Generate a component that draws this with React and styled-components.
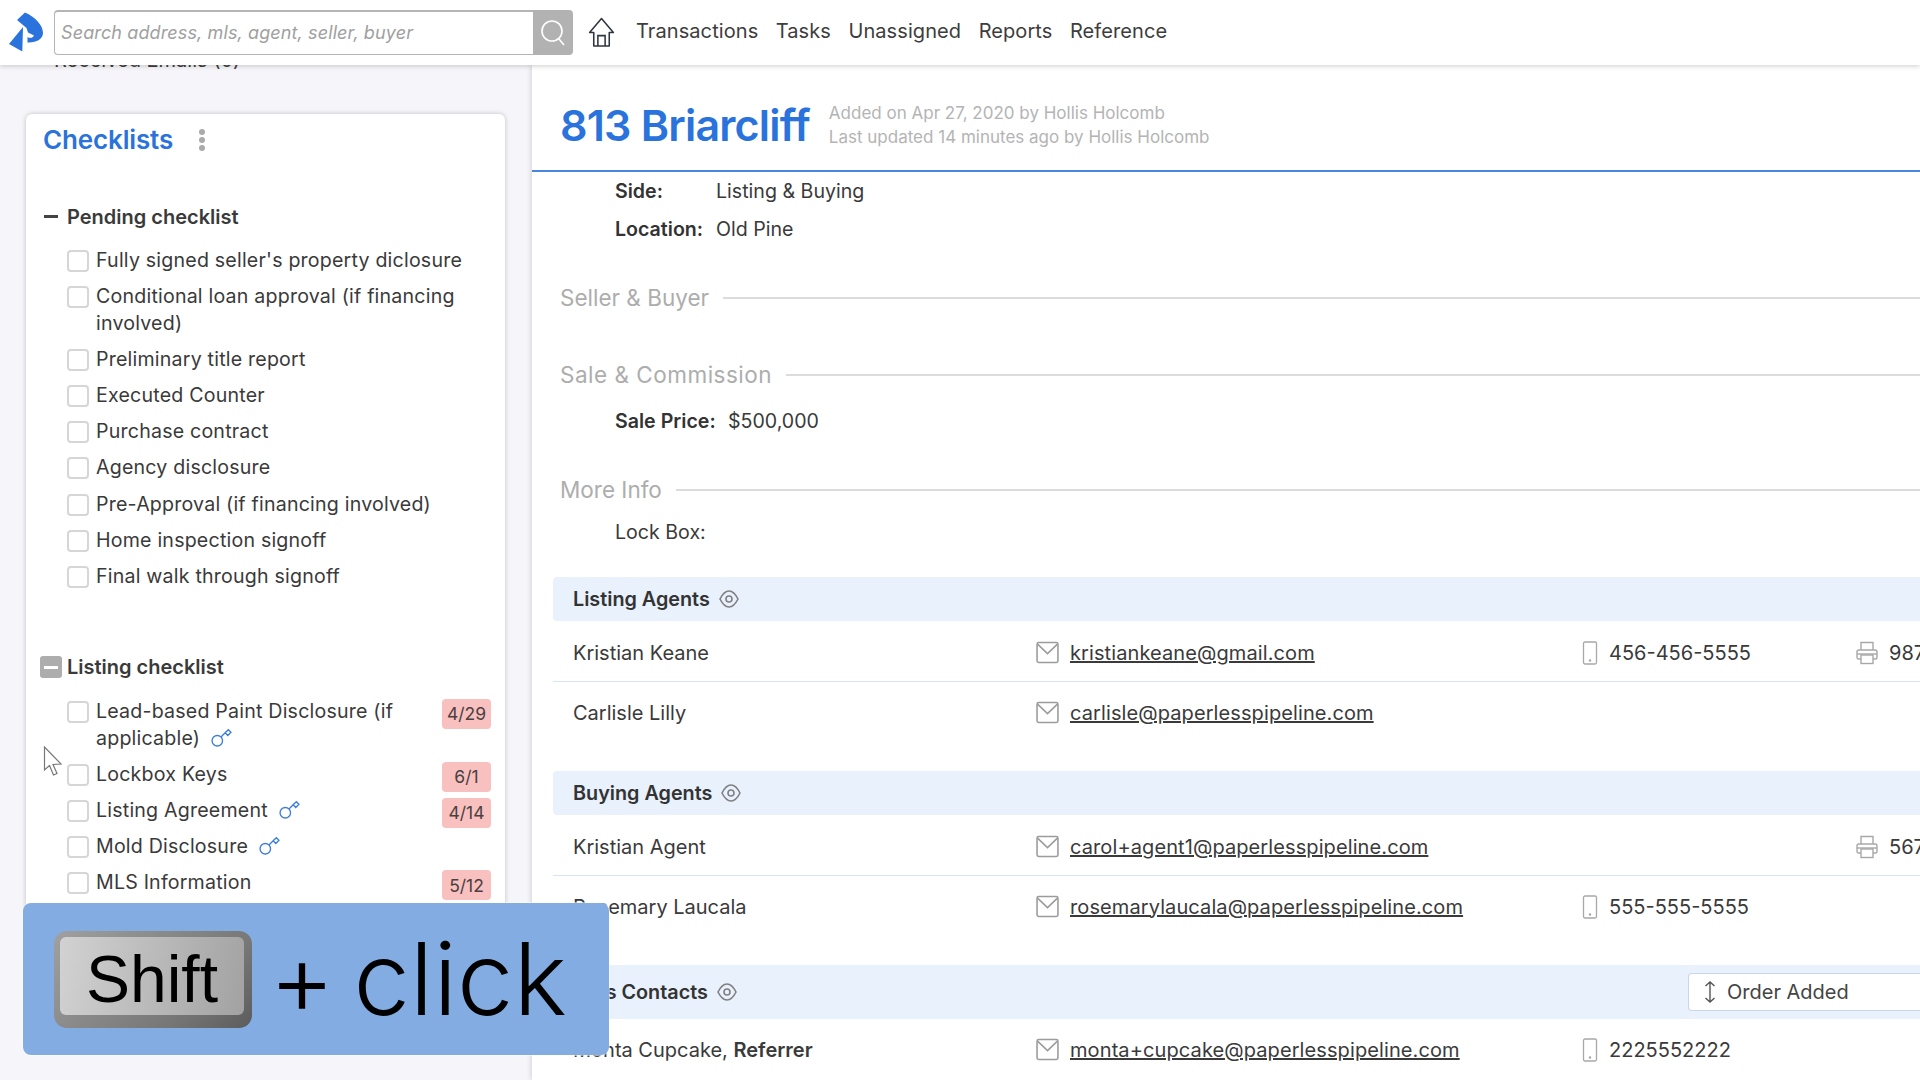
import React from "react";
import styled, { createGlobalStyle } from "styled-components";

const Global = createGlobalStyle`
  html, body { margin: 0; padding: 0; height: 100%; overflow: hidden; }
  body { font-family: Inter, "Noto Sans", sans-serif; color: #3a3a3a; background: #fff; }
  * { box-sizing: border-box; }
`;

const Page = styled.div`
  position: relative;
  width: 1920px;
  height: 1080px;
  overflow: hidden;
  display: flex;
  flex-direction: column;
`;

const Header = styled.header`
  position: relative;
  z-index: 2;
  flex: 0 0 65px;
  height: 65px;
  background: #fff;
  box-shadow: 0 1px 5px rgba(0, 0, 0, 0.2);
  display: flex;
  align-items: center;
  padding-left: 9px;
`;

const Search = styled.div`
  display: flex;
  width: 519px;
  height: 45px;
  margin-left: 9px;
`;

const SearchField = styled.div`
  flex: 1;
  border: 1px solid #b5b5b5;
  border-top: 2px solid #b5b5b5;
  border-right: 0;
  border-radius: 4px 0 0 4px;
  display: flex;
  align-items: center;
  padding: 0 0 2px 6px;
  font-style: italic;
  font-size: 18px;
  letter-spacing: 0.12px;
  color: #a0a0a0;
`;

const SearchButton = styled.div`
  flex: 0 0 40px;
  background: #b2b2b2;
  border-radius: 0 4px 4px 0;
  display: flex;
  align-items: center;
  justify-content: center;
`;

const HomeLink = styled.div`
  margin-left: 15px;
  display: flex;
`;

const Nav = styled.nav`
  display: flex;
  margin-left: 21px;
  gap: 17.5px;
  padding-bottom: 3px;
`;

const NavItem = styled.span`
  font-size: 20px;
  letter-spacing: 0.08px;
  color: #3d3d3d;
`;

const Body = styled.div`
  flex: 1;
  display: flex;
  min-height: 0;
`;

const Sidebar = styled.aside`
  flex: 0 0 532px;
  background: #f6f5f9;
  overflow: hidden;
  padding-left: 26px;
`;

const ClippedLine = styled.div`
  margin: -18px 0 40px 28px;
  height: 27px;
  line-height: 27px;
  font-size: 20px;
  color: #3d3d3d;
`;

const Card = styled.section`
  width: 479px;
  background: #fff;
  border-radius: 6px;
  box-shadow: 0 0 5px rgba(0, 0, 0, 0.22);
  padding: 0 14px 70px 17px;
`;

const CardTitleRow = styled.div`
  height: 51px;
  margin-bottom: 1px;
  display: flex;
  align-items: center;
`;

const CardTitle = styled.h2`
  margin: 0;
  font-size: 26px;
  font-weight: 600;
  letter-spacing: -0.15px;
  color: #2a73dc;
`;

const KebabDots = styled.div`
  margin-left: 26px;
  display: flex;
  flex-direction: column;
  gap: 2px;
`;

const Dot = styled.i`
  display: block;
  width: 6px;
  height: 6px;
  border-radius: 50%;
  background: #aaa;
`;

const ChecklistBody = styled.div`
  padding-left: 24px;
`;

const ChecklistHeading = styled.div`
  display: flex;
  align-items: center;
  height: 27px;
  margin: ${(p) => p.$top}px 0 17px -27px;
  gap: 5px;
  font-size: 20px;
  font-weight: 600;
  color: #3a3a3a;
`;

const Toggle = styled.span`
  flex: 0 0 22px;
  height: 22px;
  border-radius: 3px;
  display: flex;
  align-items: center;
  justify-content: center;
  background: ${(p) => (p.$filled ? "#adadad" : "transparent")};
  &::before {
    content: "";
    width: 14px;
    height: 3px;
    background: ${(p) => (p.$filled ? "#fff" : "#444")};
  }
`;

const ItemList = styled.div`
  display: flex;
  flex-direction: column;
  gap: 9.1px;
`;

const Item = styled.div`
  display: flex;
  align-items: flex-start;
`;

const Box = styled.span`
  flex: 0 0 22px;
  height: 22px;
  margin-top: 3px;
  margin-right: 7px;
  background: #fff;
  border: 2px solid #d6d6d6;
  border-radius: 4px;
`;

const ItemText = styled.div`
  flex: 1;
  font-size: 19.6px;
  line-height: 27px;
  letter-spacing: 0.2px;
  color: #3a3a3a;
  white-space: nowrap;
`;

const KeyMark = styled.svg`
  margin-left: 11px;
  vertical-align: -2px;
`;

const DueBadge = styled.span`
  flex: 0 0 49px;
  height: 30px;
  margin: 1px 0 -4px;
  background: #f9c0c0;
  border-radius: 4px;
  display: flex;
  align-items: center;
  justify-content: center;
  font-size: 17.5px;
  color: #4a4040;
`;

const Main = styled.main`
  flex: 1;
  min-width: 0;
  background: #fff;
  box-shadow: -1px 0 5px rgba(0, 0, 0, 0.14);
  overflow: hidden;
`;

const TitleBar = styled.div`
  height: 107px;
  border-bottom: 2px solid #4a86e0;
  display: flex;
  align-items: center;
  padding: 15px 0 0 28px;
`;

const Address = styled.h1`
  margin: 0;
  font-size: 43px;
  font-weight: 600;
  letter-spacing: -0.8px;
  color: #2a73dc;
`;

const Meta = styled.div`
  margin-left: 19px;
  font-size: 17px;
  line-height: 24px;
  color: #b4b4b4;
`;

const InfoRow = styled.div`
  display: flex;
  align-items: center;
  height: 38px;
  margin-top: ${(p) => p.$top || 0}px;
  padding-left: 83px;
  font-size: 19.6px;
`;

const InfoLabel = styled.b`
  font-weight: 600;
  color: #333;
  flex: 0 0 ${(p) => p.$w}px;
`;

const SectionTitle = styled.div`
  display: flex;
  align-items: center;
  height: 40px;
  margin-top: ${(p) => p.$top}px;
  padding: 0 0 1px 28px;
  gap: 14px;
  font-size: 22.5px;
  letter-spacing: ${(p) => (p.$wide ? "0.5px" : "0")};
  color: #adadad;
  &::after {
    content: "";
    flex: 1;
    height: 2px;
    background: #dcdcdc;
  }
`;

const Band = styled.div`
  display: flex;
  align-items: center;
  height: ${(p) => p.$h || 44}px;
  margin: ${(p) => p.$top}px 0 0 21px;
  padding-left: 20px;
  background: #e8f1fc;
  border-radius: 4px 0 0 4px;
  font-size: 19.8px;
  font-weight: 600;
  color: #333;
`;

const EyeMark = styled.svg`
  margin-left: 9px;
`;

const OrderSelect = styled.div`
  margin-left: auto;
  flex: 0 0 232px;
  height: 38px;
  background: #fff;
  border: 1px solid #c9d6e6;
  border-right: 0;
  border-radius: 4px 0 0 4px;
  display: flex;
  align-items: center;
  padding-left: 15px;
  gap: 11px;
  font-size: 20px;
  font-weight: 400;
  color: #444;
`;

const ContactRow = styled.div`
  display: grid;
  grid-template-columns: 463px 546px 274px 1fr;
  align-items: center;
  height: ${(p) => (p.$rule ? 61 : 60)}px;
  margin-left: 21px;
  padding: ${(p) => (p.$rule ? 3 : 1)}px 0 0 20px;
  border-bottom: ${(p) => (p.$rule ? "1px solid #d8e6f4" : "0")};
  font-size: 20px;
  color: #3a3a3a;
  white-space: nowrap;
`;

const Cell = styled.div`
  display: flex;
  align-items: center;
  gap: 11px;
`;

const Mail = styled.a`
  color: #3a3a3a;
  text-decoration: underline;
  letter-spacing: 0.1px;
`;

const Role = styled.b`
  font-weight: 600;
`;

const Overlay = styled.div`
  position: absolute;
  z-index: 3;
  left: 23px;
  top: 903px;
  width: 586px;
  height: 152px;
  background: #82ace2;
  border-radius: 8px;
  box-shadow: 0 0 0 1px rgba(255, 255, 255, 0.5);
  display: flex;
  align-items: center;
  padding-left: 31px;
  color: #000;
`;

const KeyCap = styled.div`
  width: 198px;
  height: 97px;
  padding: 6px 8px 13px 6px;
  border-radius: 13px;
  background: linear-gradient(135deg, #a0a0a0, #777 70%, #5c5c5c);
  display: flex;
`;

const KeyFace = styled.div`
  flex: 1;
  border-radius: 6px;
  background: linear-gradient(100deg, #d2d2d2, #a2a2a2);
  display: flex;
  align-items: center;
  justify-content: center;
  padding-top: 7px;
  font-family: "Liberation Sans", Arial, sans-serif;
  font-size: 66px;
  line-height: 1;
`;

const OverlayText = styled.div`
  margin-left: 17px;
  padding-bottom: 3px;
  font-size: 101px;
  font-weight: 300;
  white-space: nowrap;
  word-spacing: -10px;
`;

const Pointer = styled.svg`
  position: absolute;
  z-index: 3;
  left: 43px;
  top: 746px;
`;

const Logo = () => (
  <svg width="36" height="42" viewBox="0 0 36 42" fill="#2a73dc">
    <path d="M0 32 L14 15 L13.300 39.500 Z" />
    <path d="M8 8 L16 0.500 C26 5 34 13 34 21 C34 27 27 31 18.500 30.500 L18.500 25 C21 26.500 24 26 25 23.500 L19 20.500 L17.500 16 Z" />
  </svg>
);

const Mag = () => (
  <svg width="26" height="28" viewBox="0 0 26 28" fill="none" stroke="#fff" strokeWidth="1.6">
    <circle cx="12" cy="12" r="10" />
    <path d="M19 20 L24 26" />
  </svg>
);

const Home = () => (
  <svg width="27" height="31" viewBox="0 0 25 30" fill="none" stroke="#2f3640" strokeWidth="1.5">
    <path d="M1 15 L12.500 1.500 L24 15 L20 15 L20 28 L5 28 L5 15 Z" strokeLinejoin="round" />
    <path d="M9 28 L9 18 L16 18 L16 28" />
  </svg>
);

const KeyIcon = () => (
  <KeyMark width="21" height="21" viewBox="0 0 20 20" fill="none" stroke="#3e7fdc" strokeWidth="1.3">
    <circle cx="6" cy="14" r="5" />
    <path d="M9.500 10.500 L13.500 6.500 L16 9 L19 6 L16.500 3.500 L13.500 6.500" />
  </KeyMark>
);

const Eye = () => (
  <EyeMark width="20" height="18" viewBox="0 0 20 18" fill="none" stroke="#808080" strokeWidth="1.6">
    <path d="M1 9 C4 3 7 1 10 1 C13 1 16 3 19 9 C16 15 13 17 10 17 C7 17 4 15 1 9 Z" />
    <circle cx="10" cy="9" r="3" />
  </EyeMark>
);

const MailIcon = () => (
  <svg width="23" height="23" viewBox="0 0 22 22" fill="none" stroke="#9c9c9c" strokeWidth="1.5">
    <rect x="1" y="1.500" width="20" height="19" rx="1.500" />
    <path d="M1.500 3 L11 12 L20.500 3" />
  </svg>
);

const PhoneIcon = () => (
  <svg width="16" height="24" viewBox="0 0 15 24" fill="none" stroke="#a8a8a8" strokeWidth="1.3">
    <rect x="1" y="1" width="13" height="22" rx="1.500" />
    <circle cx="7.500" cy="19.500" r="0.600" fill="#8a8a8a" />
  </svg>
);

const PrinterIcon = () => (
  <svg width="22" height="24" viewBox="0 0 22 24" fill="none" stroke="#a8a8a8" strokeWidth="1.4">
    <path d="M5 9 V1.500 H17 V9" />
    <path d="M5 18 H2.500 C1.500 18 1 17 1 16 V11 C1 10 2 9 3 9 H19 C20 9 21 10 21 11 V16 C21 17 20.500 18 19.500 18 H17" />
    <path d="M1 13 H21" />
    <rect x="5" y="14" width="12" height="8.500" />
  </svg>
);

const SortArrow = () => (
  <svg width="12" height="22" viewBox="0 0 12 22" fill="none" stroke="#555" strokeWidth="1.4">
    <path d="M6 1 V21 M1.500 5 L6 1 L10.500 5 M1.500 17 L6 21 L10.500 17" />
  </svg>
);

const Check = ({ children, due, hasKey }) => (
  <Item>
    <Box />
    <ItemText>
      {children}
      {hasKey && <KeyIcon />}
    </ItemText>
    {due && <DueBadge>{due}</DueBadge>}
  </Item>
);

const Person = ({ name, email, phone, fax, rule }) => (
  <ContactRow $rule={rule}>
    <div>{name}</div>
    <Cell>
      <MailIcon />
      <Mail>{email}</Mail>
    </Cell>
    <Cell>
      {phone && <PhoneIcon />}
      {phone}
    </Cell>
    <Cell>
      {fax && <PrinterIcon />}
      {fax}
    </Cell>
  </ContactRow>
);

export default function App() {
  return (
    <Page>
      <Global />
      <Header>
        <Logo />
        <Search>
          <SearchField>Search address, mls, agent, seller, buyer</SearchField>
          <SearchButton>
            <Mag />
          </SearchButton>
        </Search>
        <HomeLink>
          <Home />
        </HomeLink>
        <Nav>
          <NavItem>Transactions</NavItem>
          <NavItem>Tasks</NavItem>
          <NavItem>Unassigned</NavItem>
          <NavItem>Reports</NavItem>
          <NavItem>Reference</NavItem>
        </Nav>
      </Header>
      <Body>
        <Sidebar>
          <ClippedLine>Received Emails (0)</ClippedLine>
          <Card>
            <CardTitleRow>
              <CardTitle>Checklists</CardTitle>
              <KebabDots>
                <Dot />
                <Dot />
                <Dot />
              </KebabDots>
            </CardTitleRow>
            <ChecklistBody>
              <ChecklistHeading $top={38}>
                <Toggle />
                Pending checklist
              </ChecklistHeading>
              <ItemList>
                <Check>Fully signed seller's property diclosure</Check>
                <Check>
                  Conditional loan approval (if financing
                  <br />
                  involved)
                </Check>
                <Check>Preliminary title report</Check>
                <Check>Executed Counter</Check>
                <Check>Purchase contract</Check>
                <Check>Agency disclosure</Check>
                <Check>Pre-Approval (if financing involved)</Check>
                <Check>Home inspection signoff</Check>
                <Check>Final walk through signoff</Check>
              </ItemList>
              <ChecklistHeading $top={64}>
                <Toggle $filled />
                Listing checklist
              </ChecklistHeading>
              <ItemList>
                <Check due="4/29" hasKey>
                  Lead-based Paint Disclosure (if
                  <br />
                  applicable)
                </Check>
                <Check due="6/1">Lockbox Keys</Check>
                <Check due="4/14" hasKey>
                  Listing Agreement
                </Check>
                <Check hasKey>Mold Disclosure</Check>
                <Check due="5/12">MLS Information</Check>
              </ItemList>
            </ChecklistBody>
          </Card>
        </Sidebar>
        <Main>
          <TitleBar>
            <Address>813 Briarcliff</Address>
            <Meta>
              Added on Apr 27, 2020 by Hollis Holcomb
              <br />
              Last updated 14 minutes ago by Hollis Holcomb
            </Meta>
          </TitleBar>
          <InfoRow>
            <InfoLabel $w={101}>Side:</InfoLabel>
            Listing &amp; Buying
          </InfoRow>
          <InfoRow>
            <InfoLabel $w={101}>Location:</InfoLabel>
            Old Pine
          </InfoRow>
          <SectionTitle $top={30}>Seller &amp; Buyer</SectionTitle>
          <SectionTitle $top={37} $wide>
            Sale &amp; Commission
          </SectionTitle>
          <InfoRow $top={7}>
            <InfoLabel $w={113}>Sale Price:</InfoLabel>
            $500,000
          </InfoRow>
          <SectionTitle $top={30}>More Info</SectionTitle>
          <InfoRow $top={3}>Lock Box:</InfoRow>
          <Band $top={26}>
            Listing Agents
            <Eye />
          </Band>
          <Person
            rule
            name="Kristian Keane"
            email="kristiankeane@gmail.com"
            phone="456-456-5555"
            fax="987-654-3210"
          />
          <Person name="Carlisle Lilly" email="carlisle@paperlesspipeline.com" />
          <Band $top={29}>
            Buying Agents
            <Eye />
          </Band>
          <Person
            rule
            name="Kristian Agent"
            email="carol+agent1@paperlesspipeline.com"
            fax="567-890-1234"
          />
          <Person
            name="Rosemary Laucala"
            email="rosemarylaucala@paperlesspipeline.com"
            phone="555-555-5555"
          />
          <Band $top={29} $h={54}>
            VIPs Contacts
            <Eye />
            <OrderSelect>
              <SortArrow />
              Order Added
            </OrderSelect>
          </Band>
          <Person
            name={
              <>
                Monta Cupcake, <Role>Referrer</Role>
              </>
            }
            email="monta+cupcake@paperlesspipeline.com"
            phone="2225552222"
          />
        </Main>
      </Body>
      <Pointer width="20" height="32" viewBox="0 0 20 32" fill="#fff" stroke="#777" strokeWidth="1.2">
        <path d="M1.500 1 V24 L6.500 19.500 L10.500 29 L14 27.500 L10 18.500 L18 18 Z" />
      </Pointer>
      <Overlay>
        <KeyCap>
          <KeyFace>Shift</KeyFace>
        </KeyCap>
        <OverlayText>+ click</OverlayText>
      </Overlay>
    </Page>
  );
}
